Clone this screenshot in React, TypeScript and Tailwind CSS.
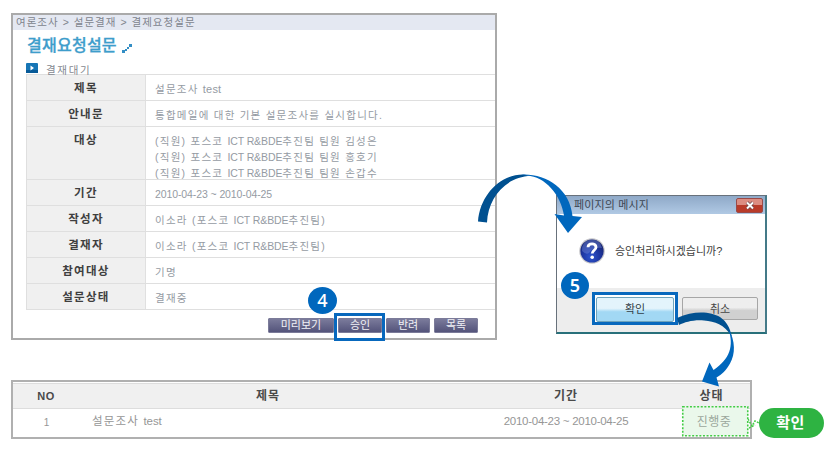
import type { ReactNode } from 'react';

type Row = { label: string; lines: ReactNode[]; size: string; tracking?: string };

function Team() {
  return (
    <>
      포스코 <span className="tracking-[-0.1px]">ICT R&amp;BDE</span>추진팀
    </>
  );
}

const rows: Row[] = [
  { label: '제목', lines: [<>설문조사 <span className="text-[11px] tracking-[0.2px]">test</span></>], size: 'h-[26px]' },
  { label: '안내문', lines: ['통합메일에 대한 기본 설문조사를 실시합니다.'], size: 'h-[26px]' },
  {
    label: '대상',
    lines: [
      <>(직원) <Team /> 팀원 김성은</>,
      <>(직원) <Team /> 팀원 홍호기</>,
      <>(직원) <Team /> 팀원 손갑수</>,
    ],
    size: 'h-[53px]',
  },
  { label: '기간', lines: ['2010-04-23 ~ 2010-04-25'], size: 'h-[26px]', tracking: 'tracking-[-0.1px]' },
  { label: '작성자', lines: [<>이소라 (<Team />)</>], size: 'h-[26px]' },
  { label: '결재자', lines: [<>이소라 (<Team />)</>], size: 'h-[26px]' },
  { label: '참여대상', lines: ['기명'], size: 'h-[26px]' },
  { label: '설문상태', lines: ['결재중'], size: 'h-[26px]' },
];

function ToolButton({ children, className }: { children: ReactNode; className: string }) {
  return (
    <button
      className={`h-[15px] rounded-[1px] border border-[#7b7b99] bg-linear-to-b from-[#7b7b9b] to-[#54547b] text-center text-[11px] leading-[13px] text-[#f1f1f6] ${className}`}
    >
      {children}
    </button>
  );
}

function RequestPanel() {
  return (
    <section className="h-[327px] w-[486px] shrink-0 border-2 border-[#aaaaaa] bg-white">
      <div className="h-[15px] bg-[#e4e8f2] pl-[3px] text-[10.5px] leading-[14px] tracking-[1.02px] whitespace-nowrap text-[#80848d]">
        여론조사 &gt; 설문결재 &gt; 결제요청설문
      </div>
      <div className="flex h-[32px] items-center gap-[5px] pl-[14px]">
        <h1 className="text-[16px] leading-[32px] font-medium tracking-[0.25px] text-[#3e9dcb] [-webkit-text-stroke:0.3px_#3e9dcb]">결재요청설문</h1>
        <svg width="10" height="9" viewBox="0 0 10 9" className="mt-[5px]">
          <path d="M0 6h3v3H0zM3 5h2v2H3zM5 3h2v2H5zM7 0h3v3H7z" fill="#338ec5" />
        </svg>
      </div>
      <div className="flex h-[12px] items-center pl-[13px]">
        <svg width="12" height="10" viewBox="0 0 12 10">
          <rect width="12" height="10" rx="1" fill="#1675b5" />
          <path d="M0 7h12v3H0z" fill="#075a98" />
          <path d="M4.5 2.5 8 5 4.5 7.5z" fill="#fff" />
        </svg>
        <span className="mt-[3px] ml-[8px] text-[10.5px] leading-[12px] tracking-[1.7px] text-[#858990]">결재대기</span>
      </div>
      <div className="ml-[13px] border-t border-l border-[#dfdfdf]">
        {rows.map((row) => (
          <div key={row.label} className={`flex border-b border-[#dfdfdf] ${row.size}`}>
            <div className="w-[119px] shrink-0 border-r border-[#e0e0e0] bg-[#f0f0f0] pt-[5px] text-center text-[11.5px] leading-[16px] font-bold tracking-[1.3px] text-[#3f3f3f]">
              {row.label}
            </div>
            <div className={`pt-[6px] pl-[9px] text-[10.5px] leading-[16px] whitespace-nowrap text-[#959ba3] ${row.tracking ?? 'tracking-[1.25px]'}`}>
              {row.lines.map((line, i) => (
                <div key={i} className="h-[16px]">{line}</div>
              ))}
            </div>
          </div>
        ))}
      </div>
      <div className="mt-[8px] flex pl-[255px]">
        <ToolButton className="w-[66px]">미리보기</ToolButton>
        <ToolButton className="ml-[4px] w-[44px]">승인</ToolButton>
        <ToolButton className="ml-[4px] w-[44px]">반려</ToolButton>
        <ToolButton className="ml-[4px] w-[44px]">목록</ToolButton>
      </div>
    </section>
  );
}

function MessageDialog() {
  return (
    <section className="mt-[182px] ml-[59px] h-[139px] w-[211px] shrink-0 border border-r-2 border-b-2 border-[#68717b] border-r-[#447a88] border-b-[#28707a] bg-white">
      <header className="flex h-[18px] items-center justify-between bg-linear-to-b from-[#8fa9c8] to-[#b0c9e4] pr-[2px] pl-[17px]">
        <span className="text-[11px] leading-[18px] tracking-[0.15px] text-[#3d4753]">페이지의 메시지</span>
        <button className="flex h-[15px] w-[27px] items-center justify-center rounded-[2px] border border-[#9a4a48] bg-linear-to-b from-[#dc8d82] from-45% to-[#b93b2a] to-50%">
          <svg width="10" height="9" viewBox="0 0 10 9">
            <path d="M2 1.5 8 7.5M8 1.5 2 7.5" stroke="#6b4548" strokeWidth="3.4" />
            <path d="M2 1.5 8 7.5M8 1.5 2 7.5" stroke="#fff" strokeWidth="2" />
          </svg>
        </button>
      </header>
      <div className="flex h-[74px] items-center pl-[22px]">
        <svg width="26" height="26" viewBox="0 0 26 26">
          <defs>
            <radialGradient id="orb" cx="45%" cy="75%" r="75%">
              <stop offset="0" stopColor="#2e55d0" />
              <stop offset="0.55" stopColor="#1c349d" />
              <stop offset="1" stopColor="#172267" />
            </radialGradient>
          </defs>
          <circle cx="13" cy="13" r="12.8" fill="#c4c4c8" />
          <circle cx="13" cy="13" r="11.6" fill="url(#orb)" />
          <path d="M3 13A10 10 0 0 1 23 10Q14 9 10 15 7 17 3 13" fill="#7b92df" opacity="0.4" />
          <path d="M9 9.2C9.2 4.8 17 4.8 17 9.2c0 3-3.8 3.1-3.8 6.3" fill="none" stroke="#fff" strokeWidth="2.8" />
          <circle cx="13.2" cy="19.2" r="1.8" fill="#fff" />
        </svg>
        <span className="ml-[10px] text-[11px] whitespace-nowrap text-[#404040]">승인처리하시겠습니까?</span>
      </div>
      <footer className="flex h-[44px] bg-[#ededed] pt-[4px] pl-[35px]">
        <div className="h-[33px] w-[86px] border-[3px] border-[#0868bd] bg-white p-[1px]">
          <button className="h-full w-full rounded-[2px] border border-[#6fa3bb] bg-linear-to-b from-[#e3f4fc] from-45% to-[#a2d8f4] to-60% text-[11px] leading-[22px] text-[#303d47]">
            확인
          </button>
        </div>
        <button className="mt-[5px] ml-[4px] h-[23px] w-[76px] rounded-[2px] border border-[#a6a6a6] bg-linear-to-b from-[#eeeeee] from-45% to-[#d0d0d0] to-60% text-[11px] leading-[20px] text-[#464646]">
          취소
        </button>
      </footer>
    </section>
  );
}

function StatusTable() {
  return (
    <section className="mt-[40px] h-[59px] w-[741px] border-2 border-[#b0b0b0] bg-white pt-[1px]">
      <div className="grid h-[26px] grid-cols-[69px_375px_218px_75px] items-center border-y border-[#dddddd] bg-[#f0f0f0] text-center text-[12px] font-bold tracking-[1px] text-[#4a4a4a]">
        <span className="pr-[3px] text-[11px] tracking-[0.4px]">NO</span>
        <span className="pr-[3px]">제목</span>
        <span>기간</span>
        <span className="pr-[2px]">상태</span>
      </div>
      <div className="grid h-[26px] grid-cols-[69px_375px_218px_75px] items-center text-center text-[11.5px] text-[#969696]">
        <span className="pr-[2px] text-[10px]">1</span>
        <span className="pl-[10px] text-left tracking-[1.2px]">설문조사 <span className="tracking-[-0.1px]">test</span></span>
        <span className="tracking-[-0.27px]">2010-04-23 ~ 2010-04-25</span>
        <span />
      </div>
    </section>
  );
}

export default function App() {
  return (
    <main className="relative h-[454px] w-[840px] overflow-hidden bg-white pt-[13px] pl-[11px] font-['Liberation_Sans','Noto_Sans_CJK_KR',sans-serif]">
      <div className="flex items-start">
        <RequestPanel />
        <MessageDialog />
      </div>
      <StatusTable />

      <div className="absolute top-[313px] left-[334px] h-[28px] w-[51px] border-[3px] border-[#0868bd]" />
      <div className="absolute top-[287px] left-[308px] flex h-[27px] w-[29px] items-center justify-center rounded-[50%] bg-[#0067bd] font-['Noto_Sans',sans-serif] text-[18px] font-medium text-white">4</div>
      <div className="absolute top-[272px] left-[561px] flex h-[27px] w-[28px] items-center justify-center rounded-[50%] bg-[#0067bd] font-['Noto_Sans',sans-serif] text-[18px] font-semibold text-white">5</div>

      <svg className="pointer-events-none absolute inset-0" width="840" height="454" viewBox="0 0 840 454">
        <path d="M478 221.5C480 195 500 174.5 523 174.5L531 175.8C505 177 488 198 487 222.5Z" fill="#005090" />
        <path d="M521 174.5C545 173 570 188 572.5 216L582 217 568 233 554.5 214 564 215.5C561 195 545 176.5 527 175.5Z" fill="#0067bd" />
        <path d="M677 318C694 310 711 311.5 720 317 727 322 729.5 327 732 337 724 324 715 321.5 704 320.5 694 319.5 685 322 679 325Z" fill="#005090" />
        <path d="M728.5 329C735.5 341 735.5 354 730 363.5 726 371 722 374 716.5 377.5L719 386.5 702 381.5 709.5 362.5 713.5 370C730 359 734 346 728.5 329Z" fill="#0067bd" />
        <path d="M748 419 752 426 755 421 759 423M749 428 755 425" fill="none" stroke="#43cc45" strokeWidth="1.5" strokeDasharray="2 1.2" />
        <rect x="682.75" y="406.75" width="65" height="29" fill="#eaf8eb" stroke="#43cc45" strokeWidth="1.6" strokeDasharray="2 1.6" />
      </svg>
      <div className="absolute top-[408px] left-[681px] w-[66px] text-center text-[12px] leading-[28px] tracking-[0.5px] text-[#9ba79c]">진행중</div>
      <div className="absolute top-[408px] left-[759px] flex h-[30px] w-[65px] items-center justify-center rounded-full bg-[#2eb342] pr-[2px] text-[15px] font-bold tracking-[0.4px] text-white">확인</div>
    </main>
  );
}
